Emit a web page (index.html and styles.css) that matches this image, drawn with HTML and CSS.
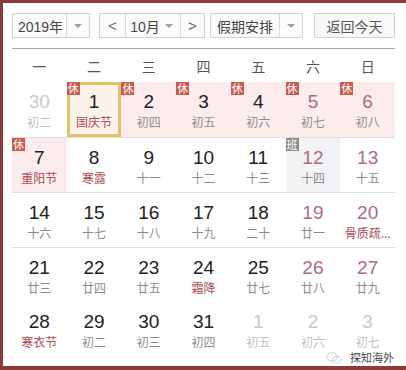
FILE: index.html
```html
<!DOCTYPE html>
<html lang="zh">
<head>
<meta charset="utf-8">
<link rel="stylesheet" href="styles.css">
</head>
<body>
<div class="frame">
  <div class="toolbar">
    <div class="sel year"><span class="sel-text">2019年</span><span class="sel-arrow"></span></div>
    <div class="month-group">
      <span class="nav">&lt;</span>
      <span class="month"><span>10月</span><span class="sel-arrow small"></span></span>
      <span class="nav right">&gt;</span>
    </div>
    <div class="sel holiday"><span class="sel-text">假期安排</span><span class="sel-arrow"></span></div>
    <div class="btn">返回今天</div>
  </div>
  <div class="weekdays">
    <span>一</span><span>二</span><span>三</span><span>四</span><span>五</span><span>六</span><span>日</span>
  </div>
  <div class="grid">
    <div class="cell other"><b>30</b><i>初二</i></div>
    <div class="cell rest sel-day"><em class="tag">休</em><b>1</b><i class="fest">国庆节</i></div>
    <div class="cell rest"><em class="tag">休</em><b>2</b><i>初四</i></div>
    <div class="cell rest"><em class="tag">休</em><b>3</b><i>初五</i></div>
    <div class="cell rest"><em class="tag">休</em><b>4</b><i>初六</i></div>
    <div class="cell rest wk"><em class="tag">休</em><b>5</b><i>初七</i></div>
    <div class="cell rest wk"><em class="tag">休</em><b>6</b><i>初八</i></div>

    <div class="cell rest line"><em class="tag">休</em><b>7</b><i class="fest">重阳节</i></div>
    <div class="cell line"><b>8</b><i class="fest">寒露</i></div>
    <div class="cell line"><b>9</b><i>十一</i></div>
    <div class="cell line"><b>10</b><i>十二</i></div>
    <div class="cell line"><b>11</b><i>十三</i></div>
    <div class="cell work wk line"><em class="tag grey">班</em><b>12</b><i>十四</i></div>
    <div class="cell wk line"><b>13</b><i>十五</i></div>

    <div class="cell line"><b>14</b><i>十六</i></div>
    <div class="cell line"><b>15</b><i>十七</i></div>
    <div class="cell line"><b>16</b><i>十八</i></div>
    <div class="cell line"><b>17</b><i>十九</i></div>
    <div class="cell line"><b>18</b><i>二十</i></div>
    <div class="cell wk line"><b>19</b><i>廿一</i></div>
    <div class="cell wk line"><b>20</b><i class="fest">骨质疏...</i></div>

    <div class="cell line"><b>21</b><i>廿三</i></div>
    <div class="cell line"><b>22</b><i>廿四</i></div>
    <div class="cell line"><b>23</b><i>廿五</i></div>
    <div class="cell line"><b>24</b><i class="fest">霜降</i></div>
    <div class="cell line"><b>25</b><i>廿七</i></div>
    <div class="cell wk line"><b>26</b><i>廿八</i></div>
    <div class="cell wk line"><b>27</b><i>廿九</i></div>

    <div class="cell"><b>28</b><i class="fest">寒衣节</i></div>
    <div class="cell"><b>29</b><i>初二</i></div>
    <div class="cell"><b>30</b><i>初三</i></div>
    <div class="cell"><b>31</b><i>初四</i></div>
    <div class="cell other"><b>1</b><i>初五</i></div>
    <div class="cell other"><b>2</b><i>初六</i></div>
    <div class="cell other"><b>3</b><i>初七</i></div>
  </div>
  <div class="watermark">
    <svg width="16" height="12" viewBox="0 0 16 12" aria-hidden="true">
      <ellipse cx="6" cy="5" rx="5.2" ry="4.2" fill="none" stroke="#b0b0b0" stroke-width="1" stroke-dasharray="1.5 1"/>
      <ellipse cx="11" cy="7.5" rx="4.2" ry="3.4" fill="none" stroke="#b0b0b0" stroke-width="1" stroke-dasharray="1.5 1"/>
    </svg>
    <span>探知海外</span>
  </div>
</div>
</body>
</html>
```

FILE: styles.css
```css
* { box-sizing: border-box; }
html, body { margin: 0; padding: 0; background: #fff; }
body {
  font-family: "Liberation Sans", "Noto Sans CJK SC", sans-serif;
  color: #222;
}
.frame {
  position: relative;
  width: 406px;
  height: 370px;
  border-top: 3px solid #8c3b3b;
  border-left: 3px solid #8c3b3b;
  border-bottom: 4px solid #8c3b3b;
  padding: 10px 11px 0 9px;
  background: #fff;
}
.toolbar {
  display: flex;
  height: 25px;
  font-size: 14px;
  color: #444;
}
.sel, .month-group, .btn {
  height: 25px;
  border: 1px solid #d2d2d2;
  background: #fbfbfb;
  display: flex;
  align-items: center;
}
.year { width: 78px; }
.sel-text {
  flex: 1;
  height: 100%;
  display: flex;
  align-items: center;
  justify-content: center;
  border-right: 1px solid #d9d9d9;
}
.year .sel-text { padding-left: 2px; }
.sel-arrow {
  width: 22px;
  height: 100%;
  display: flex;
  align-items: center;
  justify-content: center;
}
.sel-arrow::after {
  content: "";
  border-left: 4px solid transparent;
  border-right: 4px solid transparent;
  border-top: 4px solid #a0a0a0;
}
.sel-arrow.small { width: 14px; }
.month-group {
  margin-left: 9px;
  width: 106px;
}
.nav {
  width: 26px;
  height: 100%;
  display: flex;
  align-items: center;
  justify-content: center;
  border-right: 1px solid #d9d9d9;
  color: #666;
  font-size: 15px;
}
.nav.right { border-right: 0; border-left: 1px solid #d9d9d9; width: 24px; }
.month {
  flex: 1;
  display: flex;
  align-items: center;
  justify-content: center;
  gap: 2px;
}
.holiday {
  margin-left: 5px;
  width: 93px;
}
.btn {
  margin-left: 11px;
  width: 81px;
  justify-content: center;
  color: #555;
  background: #f8f8f8;
}
.weekdays {
  margin-top: 10px;
  border-top: 1px solid #a8a8a8;
  height: 34px;
  display: grid;
  grid-template-columns: repeat(7, 1fr);
  align-items: center;
  width: 383px;
  font-family: "Noto Sans CJK SC", sans-serif;
  font-size: 14px;
  color: #555;
  text-align: center;
  padding-top: 1px;
}
.grid {
  display: grid;
  grid-template-columns: repeat(7, 1fr);
  grid-auto-rows: 55px;
  width: 383px;
}
.cell {
  position: relative;
  display: flex;
  flex-direction: column;
  align-items: center;
  padding-top: 9px;
}
.cell.line { border-top: 1px solid #dedede; }
.cell b {
  font-weight: normal;
  font-size: 19px;
  line-height: 22px;
  color: #222;
}
.cell i {
  font-style: normal;
  font-family: "Noto Sans CJK SC", sans-serif;
  font-size: 12px;
  line-height: 16px;
  margin-top: 1px;
  color: #8c8c8c;
  white-space: nowrap;
}
.cell i.fest { color: #b04a52; }
.cell.wk b { color: #ad6c7d; }
.cell.other b { color: #c8c8c8; }
.cell.other i { color: #bfbfbf; }
.cell.rest { background: #fcecec; }
.cell.work { background: #f3f3f5; }
.cell.sel-day {
  border: 3px solid #e2c460;
  background: #fdf3ec;
  padding-top: 6px;
}
.cell.sel-day .tag { left: -3px; top: -3px; }
.tag {
  position: absolute;
  left: 0;
  top: 0;
  width: 13px;
  height: 13px;
  background: #c95a50;
  color: #fff;
  font-style: normal;
  font-family: "Noto Sans CJK SC", sans-serif;
  font-size: 11px;
  line-height: 13px;
  text-align: center;
}
.tag.grey { background: #8c8c8c; }
.watermark {
  position: absolute;
  right: 12px;
  bottom: 2px;
  display: flex;
  align-items: center;
  gap: 8px;
  font-family: "Noto Sans CJK SC", sans-serif;
  font-size: 11px;
  line-height: 13px;
  color: #4a4a4a;
}
```
